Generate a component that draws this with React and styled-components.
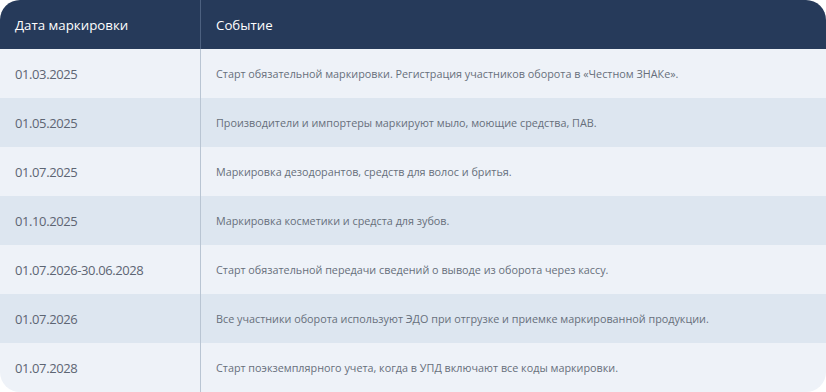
import React from "react";
import styled, { createGlobalStyle } from "styled-components";

const GlobalStyle = createGlobalStyle`
    html, body {
        margin: 0;
        padding: 0;
        background: #ffffff;
    }
    body {
        font-family: "Open Sans", "Liberation Sans", sans-serif;
    }
`;

const TableWrapper = styled.div`
    width: 826px;
    height: 392px;
    border-radius: 20px;
    overflow: hidden;
    display: grid;
    grid-template-columns: 200px 1fr;
    grid-auto-rows: 49px;
`;

const HeadCell = styled.div`
    background-color: #263a5a;
    color: #ffffff;
    font-size: 13.3px;
    display: flex;
    align-items: center;
    padding-left: 15px;
    border-left: ${(p) => (p.$first ? "none" : "1px solid #4d6180")};
`;

const Cell = styled.div`
    background-color: ${(p) => (p.$even ? "#dde6f0" : "#eef2f8")};
    display: flex;
    align-items: center;
    padding-left: 15px;
    border-left: ${(p) => (p.$first ? "none" : "1px solid #b9c5d3")};
`;

const DateText = styled.span`
    font-size: 13px;
    letter-spacing: -0.4px;
    color: #5d6573;
`;

const EventText = styled.span`
    font-size: 10.8px;
    color: #676f7b;
`;

const rows = [
    ["01.03.2025", "Старт обязательной маркировки. Регистрация участников оборота в «Честном ЗНАКе»."],
    ["01.05.2025", "Производители и импортеры маркируют мыло, моющие средства, ПАВ."],
    ["01.07.2025", "Маркировка дезодорантов, средств для волос и бритья."],
    ["01.10.2025", "Маркировка косметики и средста для зубов."],
    ["01.07.2026-30.06.2028", "Старт обязательной передачи сведений о выводе из оборота через кассу."],
    ["01.07.2026", "Все участники оборота используют ЭДО при отгрузке и приемке маркированной продукции."],
    ["01.07.2028", "Старт поэкземплярного учета, когда в УПД включают все коды маркировки."],
];

const App = () => {
    return (
        <>
            <GlobalStyle />
            <TableWrapper>
                <HeadCell $first>Дата маркировки</HeadCell>
                <HeadCell>Событие</HeadCell>
                {rows.map(([date, event], i) => (
                    <React.Fragment key={date + i}>
                        <Cell $first $even={i % 2 === 1}>
                            <DateText>{date}</DateText>
                        </Cell>
                        <Cell $even={i % 2 === 1}>
                            <EventText>{event}</EventText>
                        </Cell>
                    </React.Fragment>
                ))}
            </TableWrapper>
        </>
    );
};

export default App;
